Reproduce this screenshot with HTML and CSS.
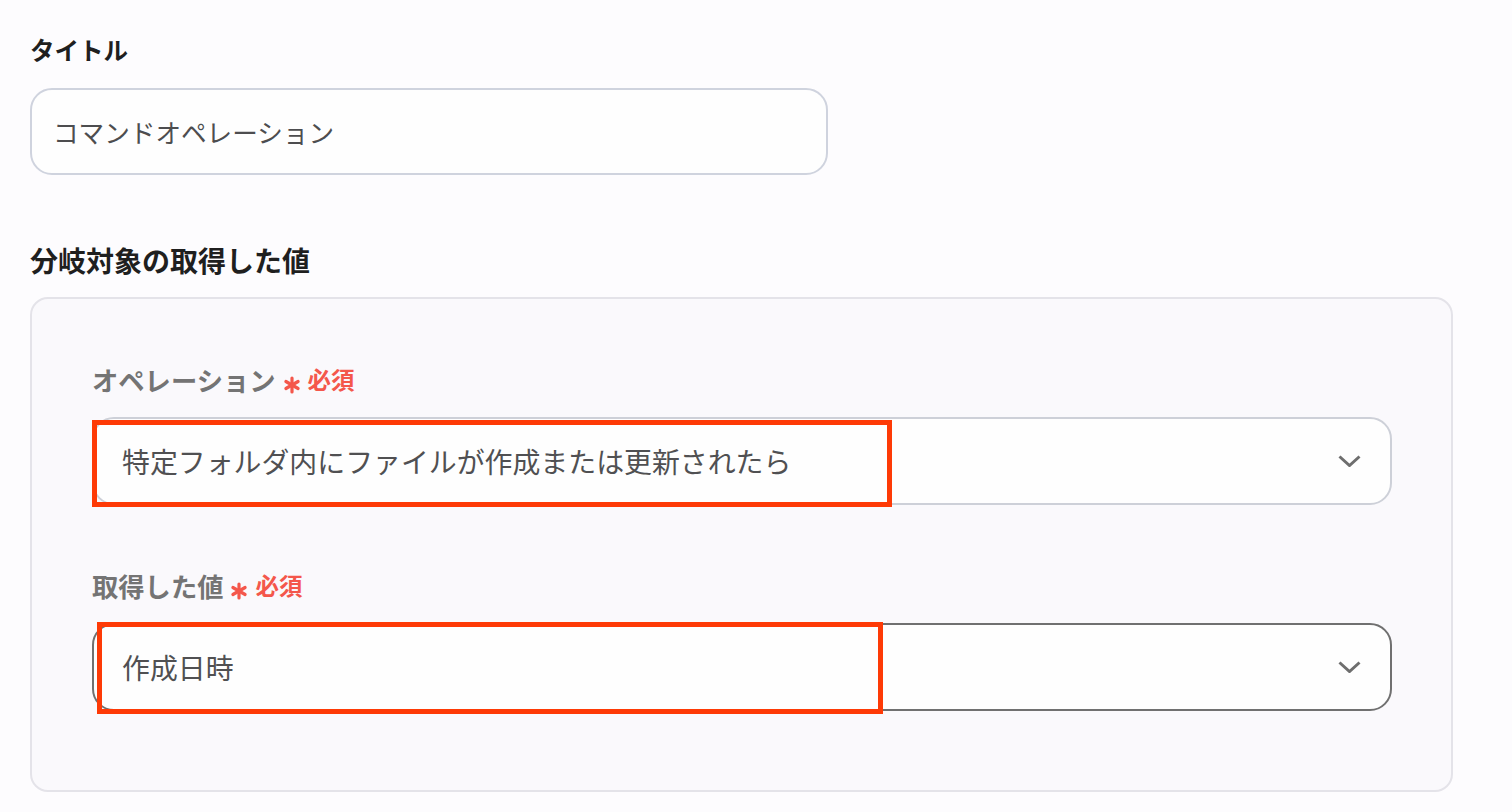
FILE: index.html
```html
<!DOCTYPE html>
<html lang="ja">
<head>
  <meta charset="UTF-8" />
  <meta name="viewport" content="width=device-width, initial-scale=1" />
  <title>コマンドオペレーション</title>
  <link rel="stylesheet" href="styles.css">
</head>
<body>

  <div class="form">
    <h2 class="section-title">タイトル</h2>
    <input class="text-input" type="text" value="コマンドオペレーション" />

    <h2 class="section-title section-title--branch">分岐対象の取得した値</h2>

    <div class="panel">
      <div class="field">
        <label class="field-label">オペレーション
          <svg class="req-mark" width="18" height="18" viewBox="0 0 18 18">
            <g stroke="#f4574b" stroke-width="3.2" stroke-linecap="round">
              <line x1="9" y1="2" x2="9" y2="16" />
              <line x1="2.9" y1="5.5" x2="15.1" y2="12.5" />
              <line x1="2.9" y1="12.5" x2="15.1" y2="5.5" />
            </g>
          </svg>
          <span class="req-text">必須</span>
        </label>
        <div class="select-wrap">
          <select class="select">
            <option selected>特定フォルダ内にファイルが作成または更新されたら</option>
          </select>
          <svg class="chevron" width="23" height="12" viewBox="0 0 23 12">
            <polyline points="1.5,1.5 11.5,10.5 21.5,1.5" fill="none" stroke="#6e6e6e" stroke-width="3" />
          </svg>
          <div class="mark mark--op"></div>
        </div>
      </div>

      <div class="field">
        <label class="field-label">取得した値
          <svg class="req-mark" width="18" height="18" viewBox="0 0 18 18">
            <g stroke="#f4574b" stroke-width="3.2" stroke-linecap="round">
              <line x1="9" y1="2" x2="9" y2="16" />
              <line x1="2.9" y1="5.5" x2="15.1" y2="12.5" />
              <line x1="2.9" y1="12.5" x2="15.1" y2="5.5" />
            </g>
          </svg>
          <span class="req-text">必須</span>
        </label>
        <div class="select-wrap">
          <select class="select select--focus">
            <option selected>作成日時</option>
          </select>
          <svg class="chevron" width="23" height="12" viewBox="0 0 23 12">
            <polyline points="1.5,1.5 11.5,10.5 21.5,1.5" fill="none" stroke="#6e6e6e" stroke-width="3" />
          </svg>
          <div class="mark mark--value"></div>
        </div>
      </div>
    </div>
  </div>

</body>
</html>
```

FILE: styles.css
```css
* {
  box-sizing: border-box;
}
body {
  font-family: "Noto Sans CJK JP", "Noto Sans", sans-serif;
  background: #fdfcfe;
  margin: 0;
  padding: 0;
}
.form {
  padding: 30px 0 0 30px;
  width: 1453px;
}
.section-title {
  margin: 0;
  font-size: 24.5px;
  line-height: 40px;
  font-weight: 700;
  color: #1f1f1f;
}
.section-title--branch {
  margin-top: 65px;
  font-size: 28px;
}
.text-input {
  display: block;
  width: 798px;
  height: 87px;
  margin-top: 18px;
  padding: 0 0 0 21px;
  font-family: inherit;
  font-size: 25.6px;
  color: #4d4d4f;
  background: #fefefe;
  border: 2px solid #cfd3de;
  border-radius: 22px;
  outline: none;
}

.panel {
  margin-top: 17px;
  background: #faf9fc;
  border: 2px solid #e4e3e9;
  border-radius: 18px;
  padding: 60px 59px 79px 60px;
  display: flex;
  flex-direction: column;
  gap: 60px;
}
.field-label {
  display: flex;
  align-items: center;
  height: 40px;
  font-size: 26.3px;
  font-weight: 700;
  color: #747474;
}
.req-mark {
  margin: 11px 7px 0 7px;
  flex-shrink: 0;
}
.req-text {
  color: #f4574b;
  font-size: 23.5px;
  font-weight: 700;
}

.select-wrap {
  position: relative;
  margin-top: 18px;
}
.select {
  display: block;
  width: 100%;
  height: 88px;
  padding: 0 70px 0 28px;
  font-family: inherit;
  font-size: 27.9px;
  color: #505052;
  background: #fefefe;
  border: 2px solid #cdd0d8;
  border-radius: 22px;
  appearance: none;
  -webkit-appearance: none;
  outline: none;
}
.select--focus {
  border-color: #707070;
}
.chevron {
  position: absolute;
  right: 31px;
  top: 38px;
  pointer-events: none;
}

/* riquadri rossi di evidenziazione */
.mark {
  position: absolute;
  border: 5px solid #fe3a06;
  pointer-events: none;
}
.mark--op {
  left: 0;
  top: 3px;
  width: 800px;
  height: 87px;
}
.mark--value {
  left: 5px;
  top: -1px;
  width: 786px;
  height: 92px;
}
```
